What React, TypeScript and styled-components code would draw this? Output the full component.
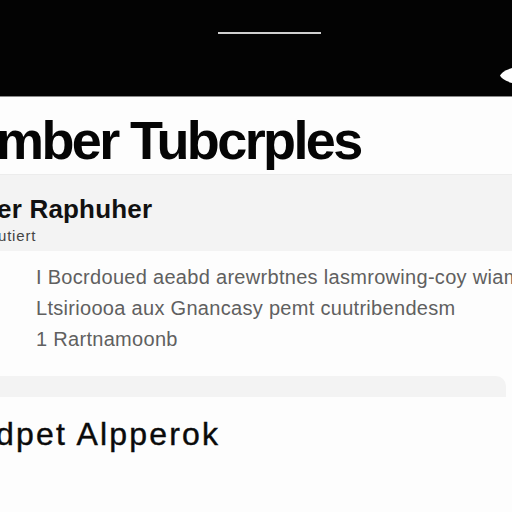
import React from 'react'
import styled, { createGlobalStyle } from 'styled-components'

const Global = createGlobalStyle`
  html, body {
    margin: 0;
    padding: 0;
    background: #fdfdfd;
    font-family: 'Liberation Sans', Arial, sans-serif;
  }
  #root {
    width: 512px;
    height: 512px;
    overflow: hidden;
  }
`

const Page = styled.div`
  display: flex;
  flex-direction: column;
  width: 512px;
  height: 512px;
  overflow: hidden;
  background: #fdfdfd;
`

const Header = styled.header`
  position: relative;
  height: 97px;
  flex-shrink: 0;
  background: #030303;
  border-bottom: 1px solid #8a8a8a;
  display: flex;
  justify-content: center;
  padding: 32px 0 0 26px;
  box-sizing: border-box;
`

const Handle = styled.div`
  width: 103px;
  height: 2px;
  background: #cfcfcf;
`

const Eye = styled.svg`
  position: absolute;
  right: 0;
  top: 68px;
`

const TitleRow = styled.div`
  height: 78px;
  display: flex;
  align-items: flex-end;
  padding-bottom: 7px;
  box-sizing: border-box;
  border-bottom: 1px solid #ececec;
`

const Title = styled.h1`
  margin: 0 0 0 -4px;
  font-size: 54px;
  line-height: 1;
  font-weight: 700;
  letter-spacing: -2.6px;
  color: #050505;
  white-space: nowrap;
`

const Band = styled.div`
  background: #f3f3f3;
  height: 76px;
  padding: 21px 0 0;
  box-sizing: border-box;
  display: flex;
  flex-direction: column;
  gap: 6px;
`

const BandTitle = styled.div`
  margin-left: -3px;
  font-size: 26px;
  line-height: 1;
  font-weight: 600;
  letter-spacing: 0.2px;
  color: #111;
  white-space: nowrap;
`

const BandSub = styled.div`
  margin-left: -2px;
  font-size: 15px;
  line-height: 1;
  letter-spacing: 0.8px;
  color: #444;
`

const Body = styled.div`
  height: 125px;
  padding: 17px 0 0 36px;
  box-sizing: border-box;
  display: flex;
  flex-direction: column;
  gap: 12px;
`

const Line = styled.div`
  font-size: 20px;
  line-height: 19px;
  color: #606060;
  white-space: nowrap;
  letter-spacing: 0.3px;
`

const Footer = styled.div`
  height: 21px;
  width: 506px;
  background: #f3f3f3;
  border-radius: 0 10px 0 0;
`

const Section = styled.div`
  padding-top: 21px;
`

const SectionTitle = styled.div`
  margin-left: -4px;
  font-size: 32px;
  line-height: 1;
  font-weight: 500;
  letter-spacing: 2.2px;
  color: #0a0a0a;
  white-space: nowrap;
  -webkit-text-stroke: 0.4px #0a0a0a;
`

export default function App() {
  return (
    <Page>
      <Global />
      <Header>
        <Handle />
        <Eye width="12" height="15" viewBox="0 0 12 15">
          <path d="M12 0 C 5 2, 1 5, 0 7.5 C 1 10, 5 13, 12 15 Z" fill="#fff" />
        </Eye>
      </Header>
      <TitleRow>
        <Title>mber Tubcrples</Title>
      </TitleRow>
      <Band>
        <BandTitle>er Raphuher</BandTitle>
        <BandSub>utiert</BandSub>
      </Band>
      <Body>
        <Line>I Bocrdoued aeabd arewrbtnes lasmrowing-coy wiam</Line>
        <Line>Ltsirioooa aux Gnancasy pemt cuutribendesm</Line>
        <Line>1 Rartnamoonb</Line>
      </Body>
      <Footer />
      <Section>
        <SectionTitle>dpet Alpperok</SectionTitle>
      </Section>
    </Page>
  )
}
